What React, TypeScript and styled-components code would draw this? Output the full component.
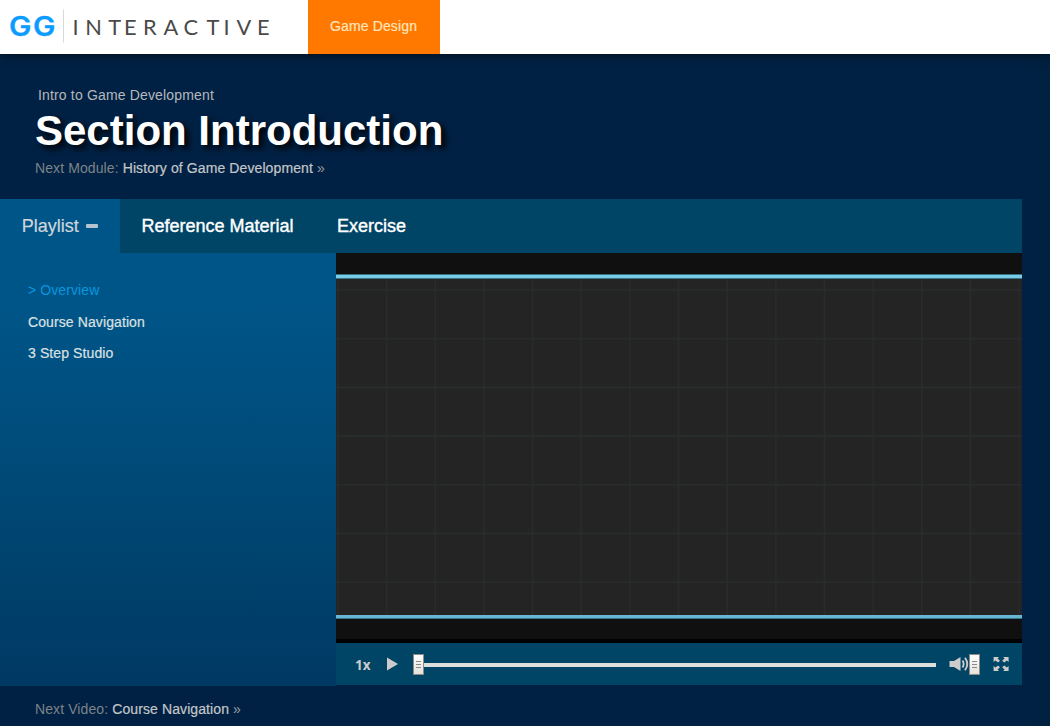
import React from "react";
import styled, { createGlobalStyle } from "styled-components";

const Global = createGlobalStyle`
  * { box-sizing: border-box; }
  html, body { margin: 0; height: 100%; overflow: hidden; }
  body {
    background: #002244;
    font-family: "Liberation Sans", Arial, sans-serif;
    font-size: 14px;
    letter-spacing: 0.1px;
    color: #bbb;
  }
`;

const Page = styled.div`
  height: 726px;
  overflow: hidden;
  background: linear-gradient(90deg, transparent 1022px, rgba(0, 32, 58, 0.5) 1050px), #002144;
`;

const Header = styled.header`
  position: relative;
  display: flex;
  height: 54px;
  background: #fff;
  box-shadow: 0 0 10px rgba(0, 0, 0, 0.75);
`;

const Logo = styled.svg`
  display: block;
  width: 308px;
  height: 54px;
  letter-spacing: 0;
`;

const CourseTab = styled.a`
  display: flex;
  align-items: center;
  justify-content: center;
  width: 132px;
  padding: 0 1px 2px 0;
  background: #ff7800;
  color: #ffe5bb;
  letter-spacing: 0.14px;
  -webkit-text-stroke: 0.2px #ffe5bb;
`;

const Intro = styled.section`
  height: 145px;
  padding: 33px 0 0 35px;
`;

const Course = styled.div`
  padding-left: 3px;
  line-height: 16px;
  letter-spacing: 0.16px;
  color: #b5b8bb;
`;

const Title = styled.h1`
  margin: 4px 0 5px;
  font-size: 42px;
  line-height: 48px;
  letter-spacing: 0;
  color: #fff;
  text-shadow: 4px 4px 6px #000;
`;

const NextLine = styled.div`
  line-height: 16px;
  color: #7d8388;
`;

const NextLink = styled.a`
  color: #c4c6c8;
  -webkit-text-stroke: 0.2px #c4c6c8;
`;

const Arrow = styled.span`
  color: #9a9ea2;
`;

const Tabs = styled.nav`
  display: flex;
  width: 1022px;
  height: 54px;
  background: #004466;
`;

const Tab = styled.a<{ $active?: boolean }>`
  display: flex;
  align-items: center;
  gap: 7px;
  padding: 0 21.8px;
  font-size: 18px;
  letter-spacing: 0;
  color: ${(p) => (p.$active ? "#cfd5da" : "#fff")};
  background: ${(p) => (p.$active ? "#005588" : "transparent")};
  -webkit-text-stroke: ${(p) => (p.$active ? "0.2px #cfd5da" : "0.4px #fff")};
`;

const Minus = styled.span`
  width: 12px;
  height: 4px;
  border-radius: 1px;
  background: #b3c3d0;
`;

const Main = styled.div`
  display: flex;
  width: 1022px;
  height: 433px;
`;

const Playlist = styled.div`
  display: flex;
  flex-direction: column;
  width: 336px;
  padding: 29px 28px;
  background: linear-gradient(#005588, #005588 12%, #004a78 50%, #003963);
`;

const PlaylistItem = styled.a<{ $current?: boolean }>`
  height: 31.5px;
  line-height: 16px;
  color: ${(p) => (p.$current ? "#0896de" : "#dde0e2")};
  -webkit-text-stroke: ${(p) => (p.$current ? "0" : "0.2px #dde0e2")};
`;

const Player = styled.div`
  width: 686px;
`;

const Video = styled.div`
  height: 390px;
  padding-top: 21px;
  background: #101010;
  border-bottom: 4px solid #000;
`;

const Frame = styled.svg`
  display: block;
  width: 686px;
  height: 345px;
`;

const Controls = styled.div`
  display: flex;
  align-items: center;
  height: 42px;
  padding: 0 13px 0 19px;
  background: #004466;
  color: #ccc;
`;

const Speed = styled.span`
  width: 31px;
  padding-top: 1px;
  font: bold 13.5px "Open Sans", sans-serif;
  letter-spacing: 0;
`;

const PlayIcon = styled.svg`
  width: 27px;
  height: 14px;
`;

const Handle = styled.span`
  display: flex;
  flex-direction: column;
  align-items: center;
  justify-content: center;
  gap: 2px;
  flex: none;
  width: 11px;
  height: 21px;
  border: 1px solid #8f8b84;
  background: linear-gradient(#fff, #e4e1dc);
`;

const Grip = styled.i`
  width: 5px;
  height: 1px;
  background: #8c8984;
`;

const Track = styled.span`
  width: 512px;
  height: 4px;
  margin-top: 2px;
  background: #dedede;
`;

const VolumeIcon = styled.svg`
  width: 20px;
  height: 16px;
  margin-left: 13px;
`;

const FullscreenIcon = styled.svg`
  width: 16px;
  height: 16px;
  margin-left: 13px;
`;

const Footer = styled.footer`
  padding: 15px 0 0 35px;
`;

const Slider = () => (
  <Handle>
    <Grip />
    <Grip />
    <Grip />
  </Handle>
);

const columns = Array.from({ length: 15 }, (_, i) => 2 + i * 48.65);
const rows = Array.from({ length: 7 }, (_, i) => 16 + i * 48.7);

export default function App() {
  return (
    <Page>
      <Global />
      <Header>
        <Logo viewBox="0 0 308 54">
          <text
            transform="scale(1.13 1)"
            x="7.9 29.1"
            y="36.2"
            fill="#0c9cff"
            stroke="#0c9cff"
            strokeWidth="0.3"
            fontFamily="Inter, sans-serif"
            fontWeight="600"
            fontSize="26.5"
          >
            GG
          </text>
          <path d="M63.5 9.5V42.5" stroke="#d8d8d8" />
          <text
            x="72.4 85.2 108.2 124 143 163.4 183.5 206.6 223.5 236.4 257"
            y="35"
            fill="#4a4a4a"
            fontFamily="Lato, sans-serif"
            fontSize="21.8"
          >
            INTERACTIVE
          </text>
        </Logo>
        <CourseTab>Game Design</CourseTab>
      </Header>
      <Intro>
        <Course>Intro to Game Development</Course>
        <Title>Section Introduction</Title>
        <NextLine>
          Next Module: <NextLink>History of Game Development</NextLink> <Arrow>»</Arrow>
        </NextLine>
      </Intro>
      <Tabs>
        <Tab $active>
          Playlist <Minus />
        </Tab>
        <Tab>Reference Material</Tab>
        <Tab>Exercise</Tab>
      </Tabs>
      <Main>
        <Playlist>
          <PlaylistItem $current>&gt; Overview</PlaylistItem>
          <PlaylistItem>Course Navigation</PlaylistItem>
          <PlaylistItem>3 Step Studio</PlaylistItem>
        </Playlist>
        <Player>
          <Video>
            <Frame viewBox="0 0 686 345">
              <rect width="686" height="345" fill="#242424" />
              {columns.map((x) => (
                <path key={x} d={`M${x} 5V341`} stroke="#282c2c" strokeWidth="1.6" />
              ))}
              {rows.map((y) => (
                <path key={y} d={`M0 ${y}H686`} stroke="#282c2c" strokeWidth="1.6" />
              ))}
              <rect width="686" height="5" fill="#367386" />
              <rect y="1" width="686" height="3" fill="#79cde7" />
              <rect y="341" width="686" height="4" fill="#35758c" />
              <rect y="341" width="686" height="3" fill="#67b7d2" />
            </Frame>
          </Video>
          <Controls>
            <Speed>1x</Speed>
            <PlayIcon viewBox="0 0 27 14">
              <path d="M1 .5 12 7 1 13.5Z" fill="#ccc" />
            </PlayIcon>
            <Slider />
            <Track />
            <VolumeIcon viewBox="0 0 20 16">
              <path d="M0.5 5H5L11.5 1V15L5 11H0.5Z" fill="#ccc" />
              <path d="M13.5 4.5Q15.8 8 13.5 11.5M16 1.8Q20.5 8 16 14.2" fill="none" stroke="#ccc" strokeWidth="1.9" />
            </VolumeIcon>
            <Slider />
            <FullscreenIcon viewBox="0 0 16 16">
              <g fill="#ccc">
                <path id="corner" d="M.6 1H6L4.6 2.6 7 4.8 5 6.6 2.4 4.6.6 6Z" />
                <use href="#corner" transform="matrix(-1 0 0 1 16.2 0)" />
                <use href="#corner" transform="matrix(1 0 0 -1 0 16)" />
                <use href="#corner" transform="matrix(-1 0 0 -1 16.2 16)" />
              </g>
            </FullscreenIcon>
          </Controls>
        </Player>
      </Main>
      <Footer>
        <NextLine>
          Next Video: <NextLink>Course Navigation</NextLink> <Arrow>»</Arrow>
        </NextLine>
      </Footer>
    </Page>
  );
}
